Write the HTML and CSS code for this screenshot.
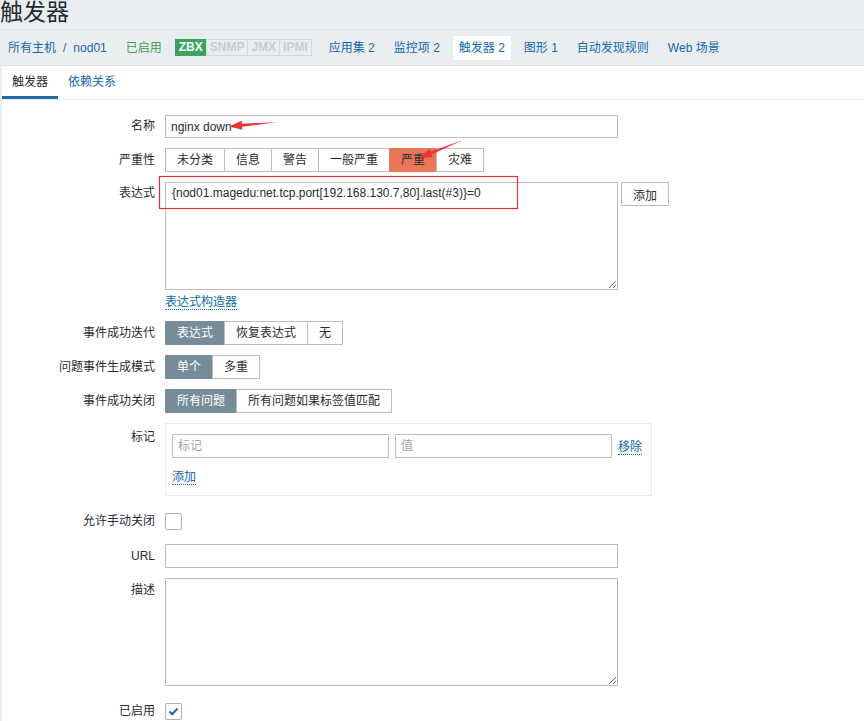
FILE: index.html
```html
<!DOCTYPE html>
<html lang="zh-CN">
<head>
<meta charset="utf-8">
<title>触发器</title>
<link rel="stylesheet" href="styles.css">
</head>
<body>
<header class="page-header"><h1 class="page-title">触发器</h1></header>
<nav class="host-nav">
  <div class="nav-item"><a href="#">所有主机</a><span class="sep">/</span><a href="#">nod01</a></div>
  <div class="nav-item status-on">已启用</div>
  <div class="status-group"><span class="st st-zbx">ZBX</span><span class="st">SNMP</span><span class="st">JMX</span><span class="st">IPMI</span></div>
  <a class="nav-item" href="#">应用集 2</a>
  <a class="nav-item" href="#">监控项 2</a>
  <a class="nav-item active" href="#">触发器 2</a>
  <a class="nav-item" href="#">图形 1</a>
  <a class="nav-item" href="#">自动发现规则</a>
  <a class="nav-item" href="#">Web 场景</a>
</nav>
<main class="panel">
  <div class="tabs"><span class="tab active">触发器</span><a class="tab" href="#">依赖关系</a></div>
  <form class="form">
    <div class="row row-name">
      <label class="lbl lbl-23">名称</label>
      <input class="text wide h23" type="text" value="nginx down">
    </div>
    <div class="row">
      <span class="lbl">严重性</span>
      <div class="seg">
        <span class="seg-item">未分类</span><span class="seg-item">信息</span><span class="seg-item">警告</span><span class="seg-item">一般严重</span><span class="seg-item sel-high">严重</span><span class="seg-item">灾难</span>
      </div>
    </div>
    <div class="row row-expr">
      <span class="lbl lbl-23">表达式</span>
      <div class="ctrl">
        <div class="expr-line">
          <textarea class="area">{nod01.magedu:net.tcp.port[192.168.130.7,80].last(#3)}=0</textarea>
          <button class="btn" type="button">添加</button>
        </div>
        <div class="below-link"><a class="link" href="#">表达式构造器</a></div>
      </div>
    </div>
    <div class="row">
      <span class="lbl">事件成功迭代</span>
      <div class="seg"><span class="seg-item sel">表达式</span><span class="seg-item">恢复表达式</span><span class="seg-item">无</span></div>
    </div>
    <div class="row">
      <span class="lbl">问题事件生成模式</span>
      <div class="seg"><span class="seg-item sel">单个</span><span class="seg-item">多重</span></div>
    </div>
    <div class="row">
      <span class="lbl">事件成功关闭</span>
      <div class="seg"><span class="seg-item sel">所有问题</span><span class="seg-item">所有问题如果标签值匹配</span></div>
    </div>
    <div class="row row-tags">
      <span class="lbl lbl-tags">标记</span>
      <div class="tags">
        <div class="tag-row">
          <input class="text tag-input" type="text" placeholder="标记">
          <input class="text tag-input" type="text" placeholder="值">
          <a class="link" href="#">移除</a>
        </div>
        <div class="tag-add"><a class="link" href="#">添加</a></div>
      </div>
    </div>
    <div class="row row-manual">
      <span class="lbl lbl-17">允许手动关闭</span>
      <span class="check"></span>
    </div>
    <div class="row">
      <span class="lbl">URL</span>
      <input class="text wide" type="text">
    </div>
    <div class="row row-desc">
      <span class="lbl">描述</span>
      <textarea class="area"></textarea>
    </div>
    <div class="row">
      <span class="lbl lbl-17">已启用</span>
      <span class="check"><svg class="tick" width="11" height="9" viewBox="0 0 11 9"><polyline points="1.5,4.5 4.2,7.2 9.5,1.5" fill="none" stroke="#1b6aa6" stroke-width="2"/></svg></span>
    </div>
  </form>
</main>
<svg class="annot" width="864" height="721" viewBox="0 0 864 721">
  <polygon points="229,126.5 241.5,120.8 241.8,123.8 277,122 242,126.8 242.3,129.8" fill="#e8353a"/>
  <polygon points="419,158 429.3,148.9 430.4,151.7 463,140 431.6,154.5 432.7,157.3" fill="#e8353a"/>
  <rect x="159.5" y="176.5" width="358" height="32" fill="none" stroke="#d9323c" stroke-width="1.2"/>
</svg>
</body>
</html>
```
FILE: styles.css
```css
* { box-sizing: border-box; }
html, body { margin: 0; padding: 0; }
body {
  background: #ebeef0;
  font-family: "Liberation Sans", "Noto Sans CJK SC", sans-serif;
  font-size: 12px;
  color: #1f2c33;
  width: 864px;
  height: 721px;
  overflow: hidden;
  position: relative;
}
a { color: #1168ab; text-decoration: none; }

.page-header { height: 29px; }
.page-title {
  margin: 0;
  font-size: 23px;
  font-weight: normal;
  line-height: 24px;
  color: #1f2c33;
}

.host-nav {
  display: flex;
  align-items: center;
  height: 37px;
  border-top: 1px solid #dfe4e7;
  border-bottom: 1px solid #dfe4e7;
  padding-left: 2px;
}
.nav-item {
  padding: 0 6px;
  margin-right: 7px;
  line-height: 24px;
  white-space: nowrap;
}
.nav-item.active { background: #fff; }
.sep { margin: 0 7px; color: #4f5b61; }
.status-on { color: #3f9c48; }
.status-group { display: flex; margin-right: 11px; }
.st {
  font-weight: bold;
  line-height: 15px;
  padding: 0 3px;
  border: 1px solid #d3dadd;
  color: #c6ced2;
  margin-left: -1px;
}
.st-zbx { background: #3aa45f; border-color: #3aa45f; color: #fff; margin-left: 0; }

.panel {
  background: #fff;
  margin-left: 2px;
  min-height: 655px;
}
.tabs {
  display: flex;
  border-bottom: 1px solid #ebeef0;
}
.tab {
  padding: 3px 10px 0;
  line-height: 27px;
  border-bottom: 3px solid transparent;
}
.tab.active { border-bottom-color: #1b6ca8; color: #1f2c33; }

.form { padding-top: 15px; }
.row {
  display: flex;
  align-items: flex-start;
  margin-bottom: 10px;
}
.lbl {
  flex: none;
  width: 153px;
  margin-right: 10px;
  text-align: right;
  line-height: 24px;
  white-space: nowrap;
}
.lbl-23 { line-height: 23px; }
.lbl-17 { line-height: 17px; }
.lbl-tags { padding-top: 2px; }

.text {
  height: 24px;
  border: 1px solid #bdbdbd;
  padding: 0 5px;
  font: inherit;
  color: inherit;
  background: #fff;
  outline: none;
  margin: 0;
}
.h23 { height: 23px; }
.wide { width: 453px; }
.text::placeholder { color: #9ba5aa; }

.area {
  display: block;
  width: 453px;
  height: 108px;
  border: 1px solid #bdbdbd;
  padding: 2px 6px;
  font: inherit;
  line-height: 16px;
  color: inherit;
  margin: 0;
  outline: none;
}
.expr-line { display: flex; align-items: flex-start; }
.btn {
  margin-left: 3px;
  height: 24px;
  width: 48px;
  border: 1px solid #bdbdbd;
  border-radius: 0;
  background: #fff;
  font: inherit;
  color: inherit;
  padding: 0;
}
.below-link { margin-top: 4px; line-height: 16px; }
.row-expr { margin-bottom: 11px; }
.link { border-bottom: 1px dotted #1168ab; }

.seg { display: flex; }
.seg-item {
  border: 1px solid #bdbdbd;
  padding: 0 11px;
  line-height: 22px;
  background: #fff;
  margin-left: -1px;
  white-space: nowrap;
}
.seg-item:first-child { margin-left: 0; }
.seg-item.sel-high { background: #e97659; border-color: #e97659; }
.seg-item.sel { background: #768d99; border-color: #768d99; color: #fff; }

.row-tags { margin-bottom: 17px; }
.tags {
  width: 487px;
  height: 73px;
  border: 1px solid #ebeef0;
  padding: 10px 9px 9px 6px;
}
.tag-row { display: flex; align-items: center; gap: 6px; }
.tag-input { width: 217px; }
.tag-add { margin-top: 11px; line-height: 16px; }

.row-manual { margin-bottom: 14px; }
.row-desc { margin-bottom: 17px; }
.check {
  width: 17px;
  height: 17px;
  border: 1px solid #a9b4ba;
  border-radius: 2px;
  background: #fff;
  display: flex;
  align-items: center;
  justify-content: center;
}

.annot {
  position: absolute;
  top: 0;
  left: 0;
  pointer-events: none;
}
```
